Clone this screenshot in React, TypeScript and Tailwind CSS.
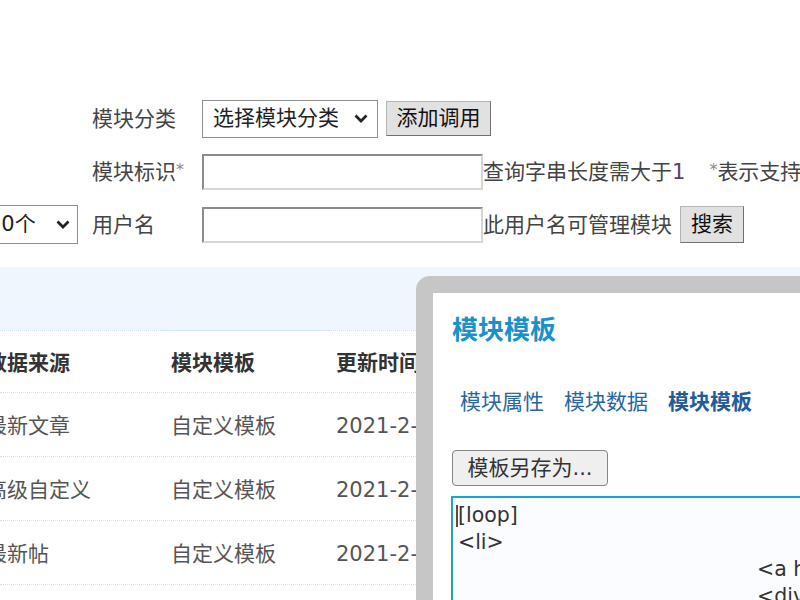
import React from 'react';

const Chevron = () => (
  <svg width="14" height="9" viewBox="0 0 14 9" className="shrink-0">
    <path d="M1.5 1.5 L7 7 L12.5 1.5" fill="none" stroke="#222" strokeWidth="2.8" />
  </svg>
);

const rows = [
  { source: '最新文章', tpl: '自定义模板', time: '2021-2-24 10:12' },
  { source: '高级自定义', tpl: '自定义模板', time: '2021-2-24 10:12' },
  { source: '最新帖', tpl: '自定义模板', time: '2021-2-24 10:12' },
];

export default function App(): JSX.Element {
  const inputCls =
    'w-[281px] h-[36px] shrink-0 bg-white border-2 border-t-[#8c8c8c] border-l-[#8c8c8c] border-r-[#d6d6d6] border-b-[#d6d6d6] outline-none';
  const btnCls =
    'shrink-0 bg-[#e1e1e1] border border-[#b4b4b4] border-r-[#707070] border-b-[#707070] text-[21px] text-[#111] leading-none';

  return (
    <div className="relative w-[800px] h-[600px] overflow-hidden bg-white font-['DejaVu_Sans','Noto_Sans_CJK_SC',sans-serif] text-[21px] text-[#444] whitespace-nowrap">
      {/* Search form */}
      <div className="pt-[92px]">
        <div className="flex h-[53px] items-center">
          <div className="w-[92px] shrink-0" />
          <div className="w-[110px] shrink-0 pt-[3px]">模块分类</div>
          <div className="flex w-[176px] h-[38px] shrink-0 items-center justify-between bg-white border border-[#8f8f8f] pl-[10px] pr-[9px] text-[#222]">
            <span>选择模块分类</span>
            <Chevron />
          </div>
          <button type="button" className={`${btnCls} ml-[8px] w-[105px] h-[35px]`}>
            添加调用
          </button>
        </div>

        <div className="flex h-[53px] items-center">
          <div className="w-[92px] shrink-0" />
          <div className="w-[110px] shrink-0 pt-[3px]">
            模块标识<span className="relative -top-[4px] text-[16px] text-[#888]">*</span>
          </div>
          <input type="text" className={inputCls} aria-label="模块标识" />
          <span className="pt-[3px]">
            查询字串长度需大于<span className="text-[#5a3f6e]">1</span>
          </span>
          <span className="ml-[24px] pt-[3px]">
            <span className="relative -top-[4px] text-[16px] text-[#888]">*</span>表示支持模糊查询
          </span>
        </div>

        <div className="flex h-[53px] items-center">
          <div className="w-[92px] shrink-0 flex justify-end pr-[14px]">
            <div className="flex w-[101px] h-[39px] shrink-0 items-center justify-between bg-white border border-[#8f8f8f] pl-[10px] pr-[7px] text-[#222]">
              <span>10个</span>
              <Chevron />
            </div>
          </div>
          <div className="w-[110px] shrink-0 pt-[3px]">用户名</div>
          <input type="text" className={inputCls} aria-label="用户名" />
          <span className="pt-[3px]">此用户名可管理模块</span>
          <button type="button" className={`${btnCls} ml-[8px] w-[64px] h-[37px]`}>
            搜索
          </button>
        </div>
      </div>

      {/* Light blue band */}
      <div className="mt-[16px] h-[63px] bg-[#eff6fd]" />

      {/* Table */}
      <div className="text-[#555]">
        <div className="flex h-[63px] font-bold text-[#333] border-b border-dotted border-[#dcdcdc]">
          <div className="w-[185px] ml-[-22px] pl-[8px] pt-[5px] flex items-center border-t border-dotted border-[#cfe0f0]">数据来源</div>
          <div className="w-[165px] pl-[8px] pt-[5px] flex items-center border-t border-[#d4e5f3]">模块模板</div>
          <div className="flex-1 pl-[8px] pt-[5px] flex items-center border-t border-dotted border-[#cfe0f0]">更新时间</div>
        </div>
        {rows.map((r) => (
          <div key={r.source} className="flex h-[64px] items-center pt-[5px] border-b border-dotted border-[#dcdcdc]">
            <div className="w-[185px] ml-[-22px] pl-[8px]">{r.source}</div>
            <div className="w-[165px] pl-[8px]">{r.tpl}</div>
            <div className="flex-1 pl-[8px]">{r.time}</div>
          </div>
        ))}
      </div>

      {/* Dialog */}
      <div className="absolute left-[416px] top-[276px] w-[520px] h-[400px] rounded-[14px] bg-[#c6c6c6] p-[17px]">
        <div className="h-full bg-white pl-[19px] pt-[19px]">
          <h3 className="h-[36px] leading-[36px] text-[26px] font-bold text-[#1a91c9]">模块模板</h3>
          <div className="mt-[39px] flex h-[30px] items-center gap-[20px] pl-[8px] pt-[2px] text-[#2865a5]">
            <span>模块属性</span>
            <span>模块数据</span>
            <span className="font-bold text-[#1f5c9c]">模块模板</span>
          </div>
          <button
            type="button"
            className="mt-[33px] w-[156px] h-[36px] rounded-[4px] border border-[#858585] bg-[#efefef] text-[21px] text-[#333] leading-none"
          >
            模板另存为...
          </button>
          <div className="mt-[10px] ml-[-1px] h-[200px] border-2 border-[#1ba1d6] bg-[#fafcff] pl-[5px] pt-[4px] text-[20.5px] leading-[27px] text-[#333] whitespace-pre">
            <div className="flex h-[27px] items-center">
              <span className="inline-block w-[2px] h-[22px] -ml-[2px] bg-[#6b4a2a]" />
              <span>[loop]</span>
            </div>
            <div className="h-[27px]">{'<li>'}</div>
            <div className="h-[27px] pl-[299px]">{'<a href="{url}"{target}>'}</div>
            <div className="h-[27px] pl-[299px]">{'<div class="title">'}</div>
          </div>
        </div>
      </div>
    </div>
  );
}
